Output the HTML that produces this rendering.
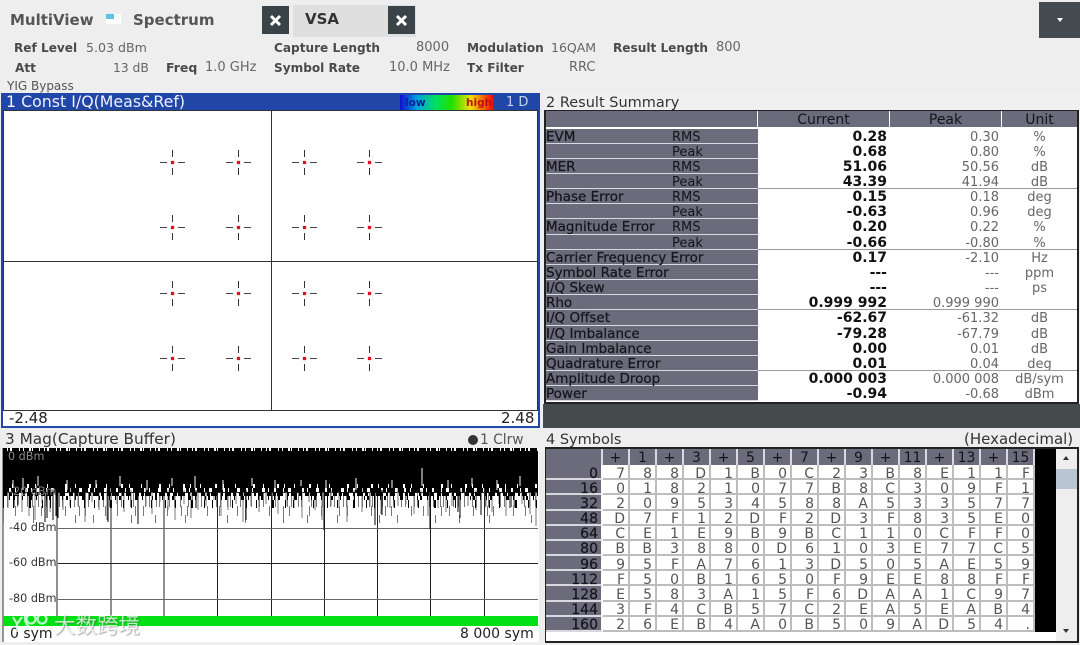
<!DOCTYPE html>
<html><head><meta charset="utf-8"><style>
html,body{margin:0;padding:0;width:1080px;height:645px;overflow:hidden;background:#eeeeee}
body{position:relative;font-family:"DejaVu Sans","Liberation Sans",sans-serif;color:#333}
.a{position:absolute}
.t{position:absolute;white-space:nowrap;line-height:16px}
.l{font-size:12.1px;font-weight:bold;color:#4a4a4a}
.v{font-size:13px;color:#666}
.x{position:absolute;background:#3a4347}
.x svg{position:absolute;left:0;top:0}
.title{position:absolute;font-size:15px;line-height:17px;white-space:nowrap;color:#333}
.c{position:absolute;width:25px;height:25px}
.c:before{content:"";position:absolute;left:0;top:12px;width:25px;height:1px;background:linear-gradient(90deg,#444 0,#444 7px,transparent 7px,transparent 18px,#444 18px)}
.c:after{content:"";position:absolute;left:12px;top:0;width:1px;height:25px;background:linear-gradient(180deg,#333 0,#333 7px,transparent 7px,transparent 18px,#333 18px)}
.c i{position:absolute;left:11px;top:11px;width:3px;height:3px;background:#e01020;box-shadow:0 0 1px #e01020;z-index:1}
#sum{position:absolute;left:546px;top:128.5px;width:531px}
.r{position:relative;height:15.16px;font-size:13.5px;line-height:15px;white-space:nowrap}
.r u{position:absolute;left:0;top:0;width:212px;height:14.16px;background:#6b6b7b;border-bottom:1px solid #d8d8de;text-decoration:none;color:#14141c;overflow:visible;-webkit-text-stroke:.2px #14141c}
.r u span{position:relative;top:1px}
.r s{position:absolute;left:126px;top:1px;text-decoration:none;color:#14141c;font-size:13px}
.r b{position:absolute;right:190px;top:1px;font-size:14px;color:#111}
.r em{position:absolute;right:78px;top:1px;font-style:normal;color:#666;font-size:13px}
.r q{position:absolute;left:456px;top:1px;width:75px;text-align:center;color:#666;quotes:none;font-size:13px}
.r q:before,.r q:after{content:""}
.sep:after{content:"";position:absolute;left:212px;width:319px;bottom:0;height:1px;background:#9a9a9a}
.h{position:absolute;top:111px;height:16px;background:#6b6b7b;color:#14141c;font-size:14px;line-height:19px;text-align:center}
#g{position:absolute;left:546px;top:449px;display:grid;grid-template-columns:57px repeat(16,27px);grid-template-rows:16px repeat(11,15.18px);font-size:14px;line-height:15px;color:#555}
#g i{font-style:normal;background:#fff;border-right:2px solid #bdbdbd;border-bottom:2px solid #bdbdbd;box-sizing:border-box;text-align:right;padding:1.5px 3px 0 0;line-height:15px}
#g b{font-weight:normal;background:#6b6b7b;border-right:2px solid #d8d8de;box-sizing:border-box;text-align:center;color:#14141c;line-height:18px}
#g p{margin:0;background:#6b6b7b;border-bottom:2px solid #d8d8de;border-right:2px solid #fff;box-sizing:border-box;text-align:right;padding:1.5px 3px 0 0;color:#14141c;line-height:15px;-webkit-text-stroke:.2px #14141c}
</style></head><body>

<div class="t" style="left:10px;top:12px;font-size:15px;font-weight:bold;color:#555">MultiView</div>
<div class="a" style="left:106px;top:14px;width:15px;height:10px;background:#fff"></div>
<div class="a" style="left:106px;top:14px;width:8px;height:5px;background:#58c4e8"></div>
<div class="t" style="left:133px;top:12px;font-size:15px;font-weight:bold;color:#555">Spectrum</div>
<div class="a" style="left:293px;top:5px;width:123px;height:32px;background:#dfdfdf"></div>
<div class="x" style="left:262px;top:6px;width:27px;height:28px"><svg width="27" height="28"><path d="M9 10L18 19M18 10L9 19" stroke="#fff" stroke-width="3" fill="none"/></svg></div>
<div class="x" style="left:388px;top:6px;width:27px;height:28px"><svg width="27" height="28"><path d="M9 10L18 19M18 10L9 19" stroke="#fff" stroke-width="3" fill="none"/></svg></div>
<div class="t" style="left:305px;top:11px;font-size:15px;font-weight:bold;color:#333">VSA</div>
<div class="a" style="left:1039px;top:2px;width:41px;height:36px;background:#434b4e"></div>
<div class="a" style="left:1057px;top:18px;width:0;height:0;border-left:3px solid transparent;border-right:3px solid transparent;border-top:4px solid #fff"></div>

<div class="t l" style="left:14px;top:40px">Ref Level</div><div class="t v" style="left:86px;top:40px;font-size:12.6px">5.03 dBm</div>
<div class="t l" style="left:15px;top:60px">Att</div><div class="t v" style="left:113px;top:60px;font-size:12.3px">13 dB</div>
<div class="t l" style="left:166px;top:60px;font-size:12.5px">Freq</div><div class="t v" style="left:205px;top:60px">1.0 GHz</div>
<div class="t l" style="left:274px;top:40px">Capture Length</div><div class="t v" style="left:416px;top:40px">8000</div>
<div class="t l" style="left:274px;top:60px">Symbol Rate</div><div class="t v" style="left:389px;top:60px">10.0 MHz</div>
<div class="t l" style="left:467px;top:40px">Modulation</div><div class="t v" style="left:551px;top:40px;font-size:12.5px">16QAM</div>
<div class="t l" style="left:467px;top:60px">Tx Filter</div><div class="t v" style="left:569px;top:60px">RRC</div>
<div class="t l" style="left:613px;top:40px">Result Length</div><div class="t v" style="left:716px;top:40px">800</div>
<div class="t" style="left:7px;top:78px;font-size:12px;color:#555">YIG Bypass</div>

<!-- Panel 1 -->
<div class="a" style="left:1px;top:93px;width:539px;height:335px;background:#2047a8"></div>
<div class="a" style="left:3px;top:110px;width:535px;height:316px;background:#333"></div>
<div class="a" style="left:4px;top:111px;width:533px;height:299px;background:#fff"></div>
<div class="a" style="left:3px;top:411px;width:535px;height:15px;background:#fff"></div>
<div class="a" style="left:271px;top:111px;width:1px;height:299px;background:#333"></div>
<div class="a" style="left:4px;top:261px;width:533px;height:1px;background:#333"></div>
<div class="title" style="left:6px;top:93px;color:#f0f0ff;font-size:15.8px">1 Const I/Q(Meas&amp;Ref)</div>
<div class="a" style="left:400px;top:95px;width:94px;height:15px;background:linear-gradient(90deg,#1010d0 0,#00a0e0 18%,#00e060 38%,#20e000 55%,#f0e000 75%,#f00000 100%)"></div>
<div class="t" style="left:405px;top:95px;font-size:10.5px;font-weight:bold;color:#102090">low</div>
<div class="t" style="left:466px;top:95px;font-size:10.5px;font-weight:bold;color:#c01010">high</div>
<div class="t" style="left:506px;top:95px;font-size:13px;color:#c8d0f0">1 D</div>

<div class="c" style="left:160px;top:150px"><i></i></div><div class="c" style="left:226px;top:150px"><i></i></div><div class="c" style="left:292px;top:150px"><i></i></div><div class="c" style="left:357px;top:150px"><i></i></div>
<div class="c" style="left:160px;top:215px"><i></i></div><div class="c" style="left:226px;top:215px"><i></i></div><div class="c" style="left:292px;top:215px"><i></i></div><div class="c" style="left:357px;top:215px"><i></i></div>
<div class="c" style="left:160px;top:281px"><i></i></div><div class="c" style="left:226px;top:281px"><i></i></div><div class="c" style="left:292px;top:281px"><i></i></div><div class="c" style="left:357px;top:281px"><i></i></div>
<div class="c" style="left:160px;top:346px"><i></i></div><div class="c" style="left:226px;top:346px"><i></i></div><div class="c" style="left:292px;top:346px"><i></i></div><div class="c" style="left:357px;top:346px"><i></i></div>

<div class="t" style="left:9px;top:410px;font-size:15px;color:#222">-2.48</div>
<div class="t" style="left:501px;top:410px;font-size:15px;color:#222">2.48</div>

<!-- Panel 2 -->
<div class="a" style="left:543px;top:93px;width:537px;height:311px;background:#f0f0f0"></div>
<div class="title" style="left:546px;top:95px;font-size:14.5px">2 Result Summary</div>
<div class="a" style="left:544px;top:110px;width:535px;height:294px;background:#222"></div>
<div class="a" style="left:546px;top:111px;width:531px;height:291px;background:#fff"></div>
<div class="h" style="left:546px;width:211px"></div>
<div class="h" style="left:758px;width:131px">Current</div>
<div class="h" style="left:890px;width:111px">Peak</div>
<div class="h" style="left:1002px;width:75px">Unit</div>
<div id="sum">
<div class="r"><u><span>EVM</span></u><s>RMS</s><b>0.28</b><em>0.30</em><q>%</q></div>
<div class="r"><u></u><s>Peak</s><b>0.68</b><em>0.80</em><q>%</q></div>
<div class="r"><u><span>MER</span></u><s>RMS</s><b>51.06</b><em>50.56</em><q>dB</q></div>
<div class="r sep"><u></u><s>Peak</s><b>43.39</b><em>41.94</em><q>dB</q></div>
<div class="r"><u><span>Phase Error</span></u><s>RMS</s><b>0.15</b><em>0.18</em><q>deg</q></div>
<div class="r"><u></u><s>Peak</s><b>-0.63</b><em>0.96</em><q>deg</q></div>
<div class="r"><u><span>Magnitude Error</span></u><s>RMS</s><b>0.20</b><em>0.22</em><q>%</q></div>
<div class="r sep"><u></u><s>Peak</s><b>-0.66</b><em>-0.80</em><q>%</q></div>
<div class="r"><u><span>Carrier Frequency Error</span></u><b>0.17</b><em>-2.10</em><q>Hz</q></div>
<div class="r"><u><span>Symbol Rate Error</span></u><b>---</b><em>---</em><q>ppm</q></div>
<div class="r"><u><span>I/Q Skew</span></u><b>---</b><em>---</em><q>ps</q></div>
<div class="r sep"><u><span>Rho</span></u><b>0.999 992</b><em>0.999 990</em></div>
<div class="r"><u><span>I/Q Offset</span></u><b>-62.67</b><em>-61.32</em><q>dB</q></div>
<div class="r"><u><span>I/Q Imbalance</span></u><b>-79.28</b><em>-67.79</em><q>dB</q></div>
<div class="r"><u><span>Gain Imbalance</span></u><b>0.00</b><em>0.01</em><q>dB</q></div>
<div class="r sep"><u><span>Quadrature Error</span></u><b>0.01</b><em>0.04</em><q>deg</q></div>
<div class="r"><u><span>Amplitude Droop</span></u><b>0.000 003</b><em>0.000 008</em><q>dB/sym</q></div>
<div class="r"><u><span>Power</span></u><b>-0.94</b><em>-0.68</em><q>dBm</q></div>
</div>
<div class="a" style="left:543px;top:404px;width:537px;height:24px;background:#444b4d"></div>

<!-- Panel 3 -->
<div class="title" style="left:5px;top:431px;font-size:15.3px">3 Mag(Capture Buffer)</div>
<div class="a" style="left:468px;top:435px;width:10px;height:10px;border-radius:5px;background:#333"></div>
<div class="t" style="left:480px;top:432px;font-size:13.8px;color:#555">1 Clrw</div>
<svg class="a" style="left:0;top:448px" width="540" height="197" viewBox="0 448 540 197">
<rect x="3" y="448" width="536" height="194" fill="#fff"/>
<path d="M3 448V642" stroke="#777" stroke-width="1.5" fill="none"/>
<g stroke="#222" fill="none" stroke-width="1">
<path d="M57 480V616M111 480V616M164 480V616M217.500 480V616M271.500 480V616M324.500 480V616M377.500 480V616M430.500 480V616M484.500 480V616"/>
<path d="M4 492.500H538M58 563.500H538"/>
</g>
<g stroke="#666" fill="none" stroke-width="1"><path d="M58 528.500H538M58 599.500H538"/></g>
<g fill="none" stroke="#777" stroke-width="1">
<path d="M3 500H538" stroke-width="14" stroke-dasharray="1 3 1 6 1 2 1 9 1 4 1 5 1 7 1 3 1 8 1 2 1 11"/>
<path d="M3 511H538" stroke-width="10" stroke-dasharray="1 11 1 17 1 7 1 23 1 13 1 5 1 19"/>
<path d="M3 519H538" stroke-width="8" stroke-dasharray="1 29 1 41 1 17 1 37 1 23"/>
<path d="M8 488V508M14 490V500M22 486V512M29 490V516M35 488V520M42 490V503M50 490V512M63 492V510M70 488V506M78 490V506M85 490V522M92 488V502M99 492V510M107 490V520M117 492V504M124 488V512M131 490V500M138 492V522M146 488V506M152 490V514M160 492V502M168 490V510M175 488V520M184 490V504M191 492V518M198 488V510M206 492V506M214 490V500M221 488V516M228 492V510M236 490V504M243 490V522M251 488V506M259 492V512M266 490V504M278 492V514M286 490V506M294 488V508M302 492V518M309 490V502M315 488V510M322 492V520M331 490V506M339 488V508M347 492V522M354 490V502M362 488V512M370 492V506M381 490V514M390 490V508M398 488V506M406 492V504M414 490V514M421 490V500M428 492V516M438 490V508M446 492V512M452 490V506M460 488V518M468 492V506M476 490V510M486 488V506M492 490V512M499 490V504M506 492V516M514 490V508M522 492V504M530 490V514M536 490V526"/>
</g>
<rect x="3" y="451" width="535" height="33" fill="#000"/>
<g fill="none" stroke="#000">
<path d="M3 449.500H538" stroke-width="3" stroke-dasharray="4 1 2 2 7 1 3 1 5 2 1 1 6 1"/>
<path d="M3 486H538" stroke-width="4" stroke-dasharray="9 1 14 2 6 1 11 1 17 2 8 1 13 2 5 1"/>
<path d="M3 490H538" stroke-width="4" stroke-dasharray="6 2 4 1 9 3 3 1 5 2 7 1 4 3 11 2 3 1 8 3"/>
<path d="M3 494H538" stroke-width="4" stroke-dasharray="4 2 3 1 6 4 2 2 6 2 3 3 4 1 7 3 2 2 5 4"/>
<path d="M3 498H538" stroke-width="4" stroke-dasharray="1 5 1 3 2 7 1 6 3 4 1 9 1 2 2 5"/>
<path d="M3 504H538" stroke-width="8" stroke-dasharray="1 9 1 15 2 11 1 7 1 19 1 13"/>
</g>
<g fill="none" stroke="#000" stroke-width="1">
<path d="M18 490V505M45 490V522M47 490V518M53 490V520M56 490V516M58 490V518M108 490V522M138 490V524M196 490V508M246 490V520M324 490V530M375 490V525M382 490V515M430 490V529M460 490V518M458 490V512M481 490V515M510 490V508"/>
</g>
<g fill="none" stroke="#fff" stroke-width="1">
<path d="M13 480V488M23 478V490M38 476V486M67 480V490M96 480V488M120 476V486M147 480V490M172 478V486M195 476V488M223 480V490M252 478V486M275 480V488M301 480V486M422 468V486M326 480V488M356 478V490M392 480V488M448 480V490M472 478V486M497 480V490M520 476V486"/>
</g>
<rect x="3" y="616" width="535" height="10" fill="#00e014"/>
</svg>
<div class="t" style="left:8px;top:449px;font-size:11.2px;color:#8a8a8a">0 dBm</div>
<div class="t" style="left:9px;top:484px;font-size:11.2px;color:#777">-20 dBm</div>
<div class="t" style="left:9px;top:520px;font-size:11.2px;color:#333">-40 dBm</div>
<div class="t" style="left:9px;top:555px;font-size:11.2px;color:#333">-60 dBm</div>
<div class="t" style="left:9px;top:591px;font-size:11.2px;color:#333">-80 dBm</div>
<div class="t" style="left:10px;top:626px;font-size:14px;color:#222">0 sym</div>
<div class="t" style="left:460px;top:626px;font-size:14px;color:#222">8 000 sym</div>
<svg class="a" style="left:10px;top:611px" width="40" height="26" viewBox="0 0 40 26" fill="none" stroke="#fff" stroke-opacity=".75" stroke-width="2.2"><path d="M3 6L7 13V21M12 6L7 13"/><circle cx="21" cy="8" r="4.500"/><circle cx="32" cy="8" r="4.500"/><path d="M15 4C14 14 20 20 30 17"/></svg>
<div class="t" style="left:54px;top:613px;font-family:'Noto Sans CJK SC',sans-serif;font-size:21.5px;line-height:24px;color:rgba(255,255,255,.72);text-shadow:1px 1px 1px rgba(90,90,90,.5)">大数跨境</div>

<!-- Panel 4 -->
<div class="title" style="left:546px;top:432px;font-size:14.5px">4 Symbols</div>
<div class="title" style="left:964px;top:431px">(Hexadecimal)</div>
<div class="a" style="left:545px;top:447px;width:534px;height:196px;background:#222"></div>
<div class="a" style="left:546px;top:449px;width:531px;height:192px;background:#fff"></div>
<div class="a" style="left:1034px;top:449px;width:22px;height:183px;background:#000"></div>
<div class="a" style="left:1056px;top:449px;width:21px;height:192px;background:#eeeeee"></div>
<div class="a" style="left:1056px;top:469px;width:21px;height:20px;background:#b9c6d2"></div>
<div class="a" style="left:1063px;top:456px;width:0;height:0;border-left:3px solid transparent;border-right:3px solid transparent;border-bottom:4px solid #333"></div>
<div class="a" style="left:1063px;top:629px;width:0;height:0;border-left:3px solid transparent;border-right:3px solid transparent;border-top:4px solid #333"></div>
<div id="g">
<b></b><b>+</b><b>1</b><b>+</b><b>3</b><b>+</b><b>5</b><b>+</b><b>7</b><b>+</b><b>9</b><b>+</b><b>11</b><b>+</b><b>13</b><b>+</b><b>15</b>
<p>0</p><i>7</i><i>8</i><i>8</i><i>D</i><i>1</i><i>B</i><i>0</i><i>C</i><i>2</i><i>3</i><i>B</i><i>8</i><i>E</i><i>1</i><i>1</i><i>F</i>
<p>16</p><i>0</i><i>1</i><i>8</i><i>2</i><i>1</i><i>0</i><i>7</i><i>7</i><i>B</i><i>8</i><i>C</i><i>3</i><i>0</i><i>9</i><i>F</i><i>1</i>
<p>32</p><i>2</i><i>0</i><i>9</i><i>5</i><i>3</i><i>4</i><i>5</i><i>8</i><i>8</i><i>A</i><i>5</i><i>3</i><i>3</i><i>5</i><i>7</i><i>7</i>
<p>48</p><i>D</i><i>7</i><i>F</i><i>1</i><i>2</i><i>D</i><i>F</i><i>2</i><i>D</i><i>3</i><i>F</i><i>8</i><i>3</i><i>5</i><i>E</i><i>0</i>
<p>64</p><i>C</i><i>E</i><i>1</i><i>E</i><i>9</i><i>B</i><i>9</i><i>B</i><i>C</i><i>1</i><i>1</i><i>0</i><i>C</i><i>F</i><i>F</i><i>0</i>
<p>80</p><i>B</i><i>B</i><i>3</i><i>8</i><i>8</i><i>0</i><i>D</i><i>6</i><i>1</i><i>0</i><i>3</i><i>E</i><i>7</i><i>7</i><i>C</i><i>5</i>
<p>96</p><i>9</i><i>5</i><i>F</i><i>A</i><i>7</i><i>6</i><i>1</i><i>3</i><i>D</i><i>5</i><i>0</i><i>5</i><i>A</i><i>E</i><i>5</i><i>9</i>
<p>112</p><i>F</i><i>5</i><i>0</i><i>B</i><i>1</i><i>6</i><i>5</i><i>0</i><i>F</i><i>9</i><i>E</i><i>E</i><i>8</i><i>8</i><i>F</i><i>F</i>
<p>128</p><i>E</i><i>5</i><i>8</i><i>3</i><i>A</i><i>1</i><i>5</i><i>F</i><i>6</i><i>D</i><i>A</i><i>A</i><i>1</i><i>C</i><i>9</i><i>7</i>
<p>144</p><i>3</i><i>F</i><i>4</i><i>C</i><i>B</i><i>5</i><i>7</i><i>C</i><i>2</i><i>E</i><i>A</i><i>5</i><i>E</i><i>A</i><i>B</i><i>4</i>
<p>160</p><i>2</i><i>6</i><i>E</i><i>B</i><i>4</i><i>A</i><i>0</i><i>B</i><i>5</i><i>0</i><i>9</i><i>A</i><i>D</i><i>5</i><i>4</i><i>.</i>
</div>
</body></html>
